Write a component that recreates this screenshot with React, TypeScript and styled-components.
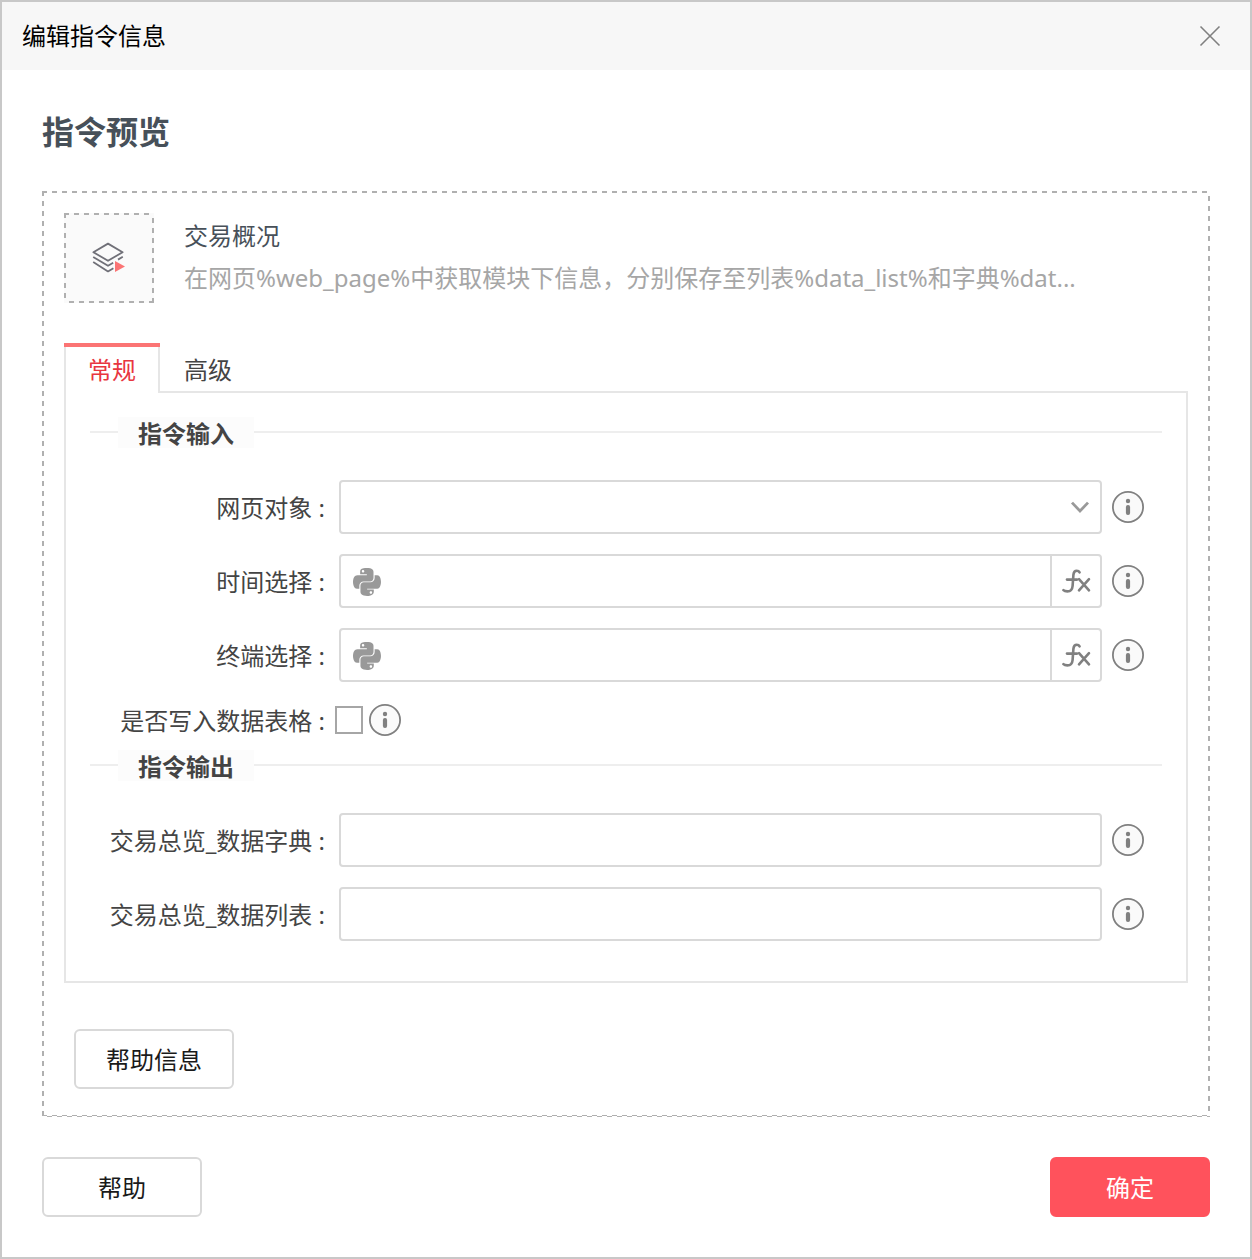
import React, { useId, useState } from "react";
import styled, { createGlobalStyle, css } from "styled-components";
import { FaPython } from "react-icons/fa";

const GlobalStyle = createGlobalStyle`
  *, *::before, *::after { box-sizing: border-box; }
  body {
    margin: 0;
    background: #ffffff;
    color: #444444;
    font-family: "Noto Sans", "Noto Sans CJK SC", sans-serif;
    font-size: 24px;
    line-height: 32px;
  }
  button, input, select { font: inherit; color: inherit; }
`;

const dash = "#b0b0b0";
const line = "#e6e6e6";
const control = "#d9d9d9";

const across = `repeating-linear-gradient(90deg, ${dash} 0 5px, transparent 5px 10px)`;
const acrossLate = `repeating-linear-gradient(90deg, transparent 0 5px, ${dash} 5px 10px)`;
const down = `repeating-linear-gradient(180deg, ${dash} 0 5px, transparent 5px 10px)`;
const downLate = `repeating-linear-gradient(180deg, transparent 0 5px, ${dash} 5px 10px)`;

const Dialog = styled.main`
  display: flex;
  flex-direction: column;
  min-height: 100vh;
  border: 2px solid #c8c8c8;
`;

const TitleBar = styled.header`
  display: flex;
  align-items: center;
  justify-content: space-between;
  height: 68px;
  padding: 0 20px;
  background: #f7f7f7;
  color: #000000;
`;

const Title = styled.h1`
  margin: 0;
  font-size: 24px;
  font-weight: 400;
`;

const IconButton = styled.button`
  display: flex;
  align-items: center;
  justify-content: center;
  flex: none;
  padding: 0;
  border: 0;
  background: transparent;
  color: #808080;
  cursor: pointer;
`;

const Body = styled.div`
  flex: 1;
  padding: 40px;
`;

const Heading = styled.h2`
  margin: 0 0 37px;
  color: #475059;
  font-size: 32px;
  font-weight: 700;
  line-height: 44px;
`;

const Preview = styled.section`
  padding: 22px 22px 28px;
  background:
    ${across} left top / 100% 2px no-repeat,
    ${across} left bottom 1px / 100% 1px no-repeat,
    ${acrossLate} left bottom / 100% 1px no-repeat,
    ${down} left top / 2px 100% no-repeat,
    ${downLate} right top / 2px 100% no-repeat;
`;

const Summary = styled.div`
  display: flex;
  gap: 30px;
`;

const Thumb = styled.div`
  display: flex;
  align-items: center;
  justify-content: center;
  flex: none;
  width: 90px;
  height: 90px;
  background:
    ${across} left top / 100% 2px no-repeat,
    ${acrossLate} left bottom / 100% 2px no-repeat,
    ${down} left top / 2px 100% no-repeat,
    ${downLate} right top / 2px 100% no-repeat,
    #fafafa;
`;

const SummaryText = styled.div`
  display: flex;
  flex-direction: column;
  gap: 10px;
  min-width: 0;
  padding-top: 7px;
`;

const Name = styled.div`
  color: #475059;
`;

const Description = styled.div`
  overflow: hidden;
  color: #a6a6a6;
  text-overflow: ellipsis;
  white-space: nowrap;
`;

const TabList = styled.div`
  display: flex;
  margin-top: 40px;
`;

const TabFiller = styled.div`
  flex: 1;
  border-bottom: 2px solid ${line};
`;

const Tab = styled.button<{ $active: boolean }>`
  height: 50px;
  padding: 3px 24px 0;
  border: 0;
  background: linear-gradient(${line}, ${line}) left bottom / 100% 2px no-repeat;
  cursor: pointer;
  ${(p) =>
    p.$active &&
    css`
      color: #e83640;
      background:
        linear-gradient(#fb7474, #fb7474) left top / 100% 4px no-repeat,
        linear-gradient(${line}, ${line}) left top / 2px 100% no-repeat,
        linear-gradient(${line}, ${line}) right top / 2px 100% no-repeat;
    `}
`;

const TabPanel = styled.div`
  padding: 24px 24px 40px;
  border: 2px solid ${line};
  border-top: 0;
`;

const Group = styled.section`
  display: flex;
  flex-direction: column;
`;

const Legend = styled.div`
  display: flex;
  margin-bottom: 32px;

  &::before,
  &::after {
    content: "";
    height: 2px;
    margin-top: 14px;
    background: #eeeeee;
  }
  &::before { width: 28px; }
  &::after { flex: 1; }
`;

const LegendText = styled.h3`
  height: 31px;
  margin: 0;
  padding: 0 20px;
  background: #fcfcfc;
  font-size: 24px;
  font-weight: 700;
  line-height: 34px;
`;

const Fields = styled.div`
  display: flex;
  flex-direction: column;
  gap: 20px;
  padding-right: 18px;
`;

const Row = styled.div`
  display: flex;
  align-items: center;
  gap: 10px;
`;

const CheckRow = styled.div`
  display: flex;
  align-items: center;
  gap: 6px;
  height: 32px;
  margin: 22px 0 14px;
`;

const Label = styled.label`
  flex: none;
  width: 235px;
  margin-right: 4px;
  padding-top: 2px;
  text-align: right;
  white-space: nowrap;
`;

const Box = styled.div`
  position: relative;
  display: flex;
  align-items: center;
  flex: 1;
  min-width: 0;
  height: 54px;
  border: 2px solid ${control};
  border-radius: 4px;
  background: #ffffff;
  color: #999999;
`;

const PythonMark = styled(FaPython)`
  flex: none;
  margin: 2px 0 0 10px;
`;

const Input = styled.input`
  flex: 1;
  min-width: 0;
  height: 100%;
  padding: 0 12px;
  border: 0;
  outline: 0;
  background: transparent;
  color: #444444;
`;

const Select = styled.select`
  width: 100%;
  height: 100%;
  padding: 0 48px 0 12px;
  border: 0;
  outline: 0;
  appearance: none;
  background: transparent;
  color: #444444;
`;

const Chevron = styled.svg`
  position: absolute;
  top: 18px;
  right: 10px;
  pointer-events: none;
`;

const FxButton = styled(IconButton)`
  width: 50px;
  height: 100%;
  border-left: 2px solid ${control};
`;

const Checkbox = styled.input`
  flex: none;
  width: 28px;
  height: 28px;
  margin: 0;
  border: 2px solid #a6a6a6;
  appearance: none;
  background: #ffffff;

  &:checked { box-shadow: inset 0 0 0 5px #ffffff; background: #ff525c; }
`;

const Button = styled.button<{ $primary?: boolean }>`
  width: 160px;
  height: 60px;
  padding: 2px 0 0;
  border: 2px solid ${(p) => (p.$primary ? "#ff525c" : control)};
  border-radius: 6px;
  background: ${(p) => (p.$primary ? "#ff525c" : "#ffffff")};
  color: ${(p) => (p.$primary ? "#ffffff" : "#1a1a1a")};
  cursor: pointer;
`;

const HelpRow = styled.div`
  display: flex;
  padding: 46px 10px 0;
`;

const Footer = styled.footer`
  display: flex;
  justify-content: space-between;
  padding: 0 40px 40px;
`;

function InfoButton() {
  return (
    <IconButton type="button" aria-label="i">
      <svg width="32" height="32" viewBox="0 0 32 32">
        <circle cx="16" cy="16" r="15.1" fill="#fafafa" stroke="#808080" strokeWidth="1.8" />
        <circle cx="16" cy="10" r="2.2" fill="#808080" />
        <rect x="13.9" y="14" width="4.2" height="10" rx="2" fill="#808080" />
      </svg>
    </IconButton>
  );
}

function FxIcon() {
  return (
    <svg width="30" height="28" viewBox="0 0 30 28" fill="none" stroke="#808080" strokeWidth="2.6" strokeLinecap="round" strokeLinejoin="round">
      <path d="M18.6 5.4C18 4.3 17 3.8 15.8 3.8C13.4 3.8 12.6 5.6 12.4 7.8L11.6 19C11.3 22.6 9.4 24.4 6.4 24.4C4.6 24.4 3.2 24 2.4 23.2" />
      <path d="M6 12.6H16" />
      <path d="M18 12.2L28 23.4M28 12.2L18 23.4" />
    </svg>
  );
}

function LayersIcon() {
  return (
    <svg width="34" height="32" viewBox="0 0 34 32" fill="none" stroke="#707078" strokeWidth="1.8" strokeLinejoin="round">
      <path d="M16 1.6L30.6 10.2L16 18.8L1.4 10.2Z" />
      <path d="M1.2 15L16 23.8L21.2 20.8M26 17.6L30.8 14.8" />
      <path d="M1.2 20L16 29.4L21.4 26.2" />
      <path d="M23 19L33 24.5L23 30Z" fill="#fb7474" stroke="none" />
    </svg>
  );
}

function SelectField({ label }: { label: string }) {
  const id = useId();
  return (
    <Row>
      <Label htmlFor={id}>{label} :</Label>
      <Box>
        <Select id={id} defaultValue="">
          <option value="" />
        </Select>
        <Chevron width="20" height="14" viewBox="0 0 20 14" fill="none" stroke="#999999" strokeWidth="2.8">
          <path d="M2 2.6L10 11L18 2.6" />
        </Chevron>
      </Box>
      <InfoButton />
    </Row>
  );
}

function TextField({ label, expression = false }: { label: string; expression?: boolean }) {
  const id = useId();
  return (
    <Row>
      <Label htmlFor={id}>{label} :</Label>
      <Box>
        {expression && <PythonMark size={32} />}
        <Input id={id} type="text" />
        {expression && (
          <FxButton type="button" aria-label="fx">
            <FxIcon />
          </FxButton>
        )}
      </Box>
      <InfoButton />
    </Row>
  );
}

function CheckField({ label }: { label: string }) {
  const id = useId();
  return (
    <CheckRow>
      <Label htmlFor={id}>{label} :</Label>
      <Checkbox id={id} type="checkbox" />
      <InfoButton />
    </CheckRow>
  );
}

const tabs = ["常规", "高级"];

export default function App() {
  const [active, setActive] = useState(tabs[0]);
  return (
    <>
      <GlobalStyle />
      <Dialog>
        <TitleBar>
          <Title>编辑指令信息</Title>
          <IconButton type="button" aria-label="×">
            <svg width="40" height="40" viewBox="0 0 40 40" stroke="#808080" strokeWidth="1.6">
              <path d="M10.5 10.5L29.5 29.5M29.5 10.5L10.5 29.5" />
            </svg>
          </IconButton>
        </TitleBar>
        <Body>
          <Heading>指令预览</Heading>
          <Preview>
            <Summary>
              <Thumb>
                <LayersIcon />
              </Thumb>
              <SummaryText>
                <Name>交易概况</Name>
                <Description>
                  在网页%web_page%中获取模块下信息，分别保存至列表%data_list%和字典%dat...
                </Description>
              </SummaryText>
            </Summary>
            <TabList role="tablist">
              {tabs.map((name) => (
                <Tab
                  key={name}
                  type="button"
                  role="tab"
                  aria-selected={active === name}
                  $active={active === name}
                  onClick={() => setActive(name)}
                >
                  {name}
                </Tab>
              ))}
              <TabFiller />
            </TabList>
            <TabPanel role="tabpanel">
              <Group>
                <Legend>
                  <LegendText>指令输入</LegendText>
                </Legend>
                <Fields>
                  <SelectField label="网页对象" />
                  <TextField label="时间选择" expression />
                  <TextField label="终端选择" expression />
                </Fields>
                <CheckField label="是否写入数据表格" />
              </Group>
              <Group>
                <Legend>
                  <LegendText>指令输出</LegendText>
                </Legend>
                <Fields>
                  <TextField label="交易总览_数据字典" />
                  <TextField label="交易总览_数据列表" />
                </Fields>
              </Group>
            </TabPanel>
            <HelpRow>
              <Button type="button">帮助信息</Button>
            </HelpRow>
          </Preview>
        </Body>
        <Footer>
          <Button type="button">帮助</Button>
          <Button type="button" $primary>确定</Button>
        </Footer>
      </Dialog>
    </>
  );
}
